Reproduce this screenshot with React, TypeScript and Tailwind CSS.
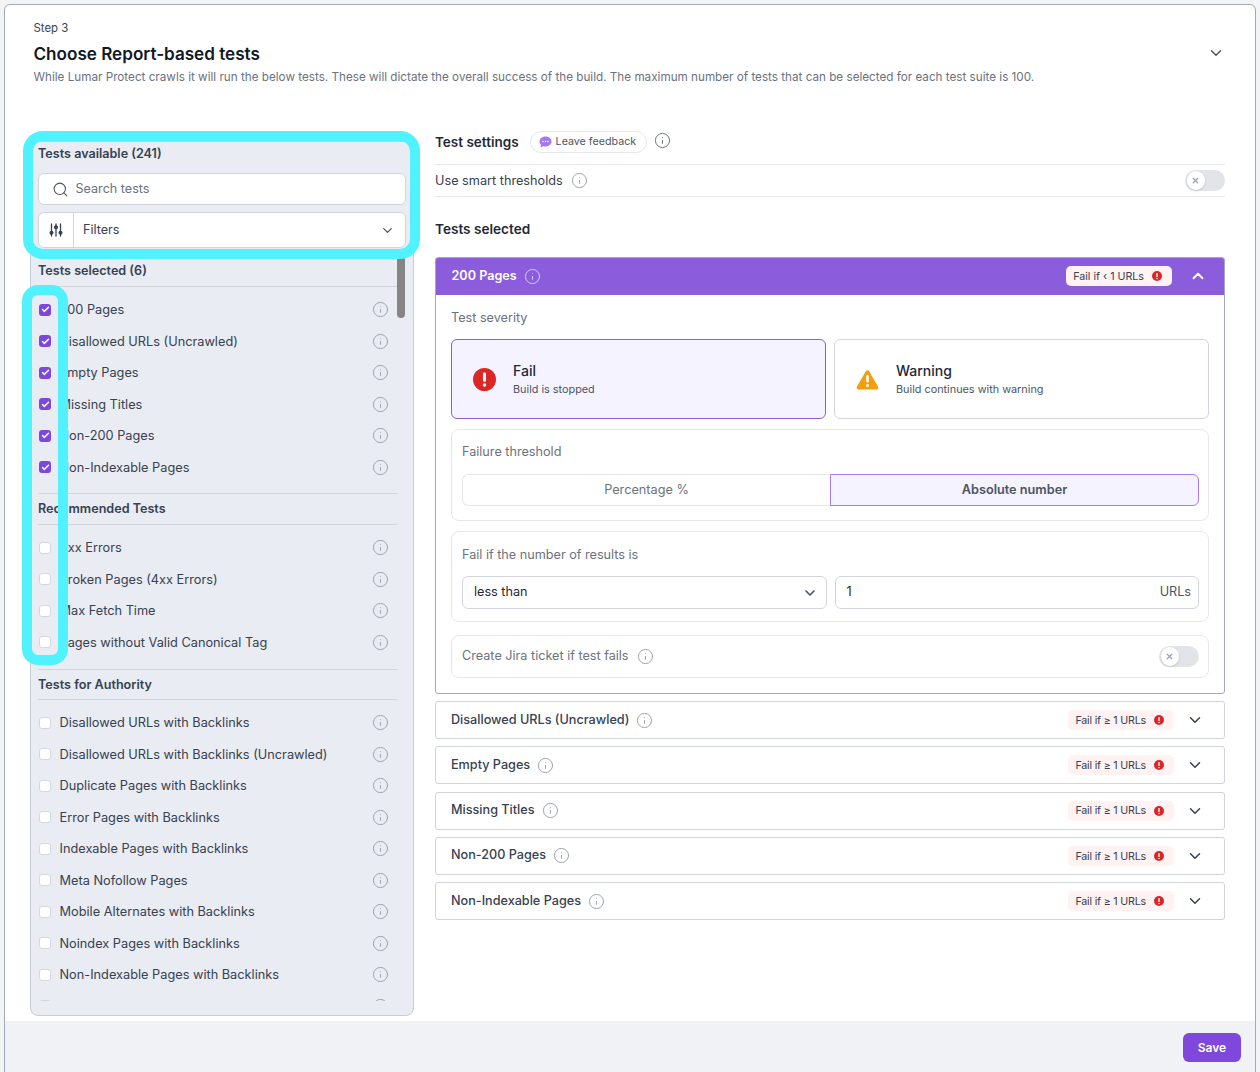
import React from 'react';
import { Check, ChevronDown, ChevronUp, Info, Search, X } from 'lucide-react';

const selectedTests = ['200 Pages', 'Disallowed URLs (Uncrawled)', 'Empty Pages', 'Missing Titles', 'Non-200 Pages', 'Non-Indexable Pages'];
const recommendedTests = ['4xx Errors', 'Broken Pages (4xx Errors)', 'Max Fetch Time', 'Pages without Valid Canonical Tag'];
const authorityTests = [
  'Disallowed URLs with Backlinks',
  'Disallowed URLs with Backlinks (Uncrawled)',
  'Duplicate Pages with Backlinks',
  'Error Pages with Backlinks',
  'Indexable Pages with Backlinks',
  'Meta Nofollow Pages',
  'Mobile Alternates with Backlinks',
  'Noindex Pages with Backlinks',
  'Non-Indexable Pages with Backlinks',
  '', // next row is scrolled out, only the top of its info icon shows
];
const collapsedTests = ['Disallowed URLs (Uncrawled)', 'Empty Pages', 'Missing Titles', 'Non-200 Pages', 'Non-Indexable Pages'];

const InfoIcon: React.FC<{ className?: string }> = ({ className = 'text-[#9ca3af]' }) => (
  <Info size={17} strokeWidth={1.4} className={`shrink-0 ${className}`} />
);

const FailIcon: React.FC<{ size: number }> = ({ size }) => (
  <svg width={size} height={size} viewBox="0 0 24 24" className="shrink-0">
    <circle cx="12" cy="12" r="12" fill="#dc2626" />
    <rect x="10.4" y="4.8" width="3.2" height="9.6" rx="1.4" fill="#fff" />
    <circle cx="12" cy="17.8" r="1.8" fill="#fff" />
  </svg>
);

const WarningIcon: React.FC = () => (
  <svg width="23" height="21" viewBox="0 0 23 21" className="shrink-0">
    <path d="M11.5 1.2c.7 0 1.3.4 1.7 1l8.9 15.6c.7 1.2-.1 2.7-1.5 2.7H2.4c-1.4 0-2.2-1.5-1.5-2.7L9.8 2.2c.4-.6 1-1 1.7-1z" fill="#f59e0b" />
    <rect x="10.2" y="6" width="2.6" height="7.6" rx="1.1" fill="#fff" />
    <circle cx="11.5" cy="16.4" r="1.5" fill="#fff" />
  </svg>
);

const FiltersIcon: React.FC = () => (
  <svg width="14" height="14" viewBox="0 0 14 14" fill="none" stroke="#374151" strokeWidth="1.3" strokeLinecap="round">
    <path d="M2.5 1v7M2.5 11.5V13M7 1v1.5M7 6v7M11.5 1v7M11.5 11.5V13" />
    <circle cx="2.5" cy="9.8" r="1.4" fill="#374151" />
    <circle cx="7" cy="4.2" r="1.4" fill="#374151" />
    <circle cx="11.5" cy="9.8" r="1.4" fill="#374151" />
  </svg>
);

const FeedbackIcon: React.FC = () => (
  <svg width="13" height="12" viewBox="0 0 13 12" className="shrink-0">
    <path d="M6.5.5C9.9.5 12.5 2.7 12.5 5.5S9.9 10.5 6.5 10.5c-.8 0-1.5-.1-2.2-.3L1.5 11.5l.5-2.8C1 7.8.5 6.7.5 5.5.5 2.7 3.1.5 6.5.5z" fill="#a678f0" />
    <circle cx="4" cy="5.5" r=".8" fill="#fff" />
    <circle cx="6.5" cy="5.5" r=".8" fill="#fff" />
    <circle cx="9" cy="5.5" r=".8" fill="#fff" />
  </svg>
);

const Toggle: React.FC = () => (
  <div className="flex h-[21px] w-10 shrink-0 items-center rounded-full bg-[#e2e4e9] pl-[1.5px]">
    <div className="flex h-[18.5px] w-[18.5px] items-center justify-center rounded-full bg-white shadow-sm">
      <X size={9} strokeWidth={3.5} className="text-[#9ca3af]" />
    </div>
  </div>
);

const TestRow: React.FC<{ label: string; checked?: boolean }> = ({ label, checked }) => (
  <div className="flex h-[31.5px] items-center pl-px pr-[17px]">
    {checked ? (
      <div className="flex h-3 w-3 shrink-0 items-center justify-center rounded-[3px] bg-[#7c47dc]">
        <Check size={9} strokeWidth={4} className="text-white" />
      </div>
    ) : (
      <div className="h-3 w-3 shrink-0 rounded-[3px] border border-[#d4d7e0] bg-white" />
    )}
    <span className="ml-[8.5px] flex-1 text-[12.75px] text-[#374151]">{label}</span>
    <InfoIcon />
  </div>
);

const GroupTitle: React.FC<{ title: string; className?: string }> = ({ title, className }) => (
  <div className={`mr-[9px] border-b border-[#d1d5db] text-[12.6px] font-semibold leading-4 text-[#374151] ${className}`}>{title}</div>
);

const FailBadge: React.FC<{ text: string; className?: string }> = ({ text, className }) => (
  <div className={`flex h-5 items-center gap-2 rounded-[5px] bg-[#fef2f2] pl-[7px] pr-[10px] text-[10.7px] text-[#374151] ${className}`}>
    <span className="pt-[2px]">{text}</span>
    <FailIcon size={10} />
  </div>
);

const App: React.FC = () => {
  return (
    <div className="relative h-[1072px] overflow-hidden bg-[#f3f4f6] pl-1 pr-1 pt-1 font-['Inter',sans-serif]">
      <div className="flex h-[1080px] flex-col rounded-t-md border border-[#a3a9bc] bg-white">
        <div className="flex justify-between pl-[28.5px] pr-[30px] pt-[15px]">
          <div>
            <p className="text-[11.4px] leading-4 text-[#374151]">Step 3</p>
            <h1 className="mt-[6px] text-[17.1px] font-semibold leading-6 text-[#111827]">Choose Report-based tests</h1>
            <p className="mt-[3px] text-[11.7px] leading-4 text-[#6b7280]">
              While Lumar Protect crawls it will run the below tests. These will dictate the overall success of the build. The maximum number of tests that can be selected for each test suite is 100.
            </p>
          </div>
          <ChevronDown size={18} className="mt-6 text-[#4b5563]" />
        </div>

        <div className="mt-[56px] flex gap-[21px] pl-[25px] pr-[30px]">
          {/* tests available */}
          <div className="relative h-[875px] w-[384px] shrink-0 overflow-hidden rounded-lg border border-[#c9cdd9] bg-[#e9ecf2] px-[7px]">
            <div className="absolute right-2 top-[108px] h-[68px] w-2 rounded-b-full bg-[#858585]" />
            <div className="h-[859px] overflow-hidden">
              <p className="mt-[4px] text-[12.6px] font-semibold leading-4 text-[#374151]">Tests available (241)</p>
              <div className="mt-[11px] flex h-8 items-center rounded-md border border-[#d1d5db] bg-white pl-[13px]">
                <Search size={17} strokeWidth={1.5} className="text-[#4b5563]" />
                <span className="ml-[6.5px] text-[12.6px] text-[#6b7280]">Search tests</span>
              </div>
              <div className="mt-[7px] flex h-[36px] items-center rounded-md border border-[#d1d5db] bg-white">
                <div className="flex h-full w-[35px] items-center justify-center border-r border-[#d1d5db]">
                  <FiltersIcon />
                </div>
                <span className="ml-[9px] flex-1 text-[12.6px] text-[#374151]">Filters</span>
                <ChevronDown size={15} className="mr-[10px] text-[#4b5563]" />
              </div>

              <GroupTitle title="Tests selected (6)" className="mt-[15px] pb-[7px]" />
              <div className="mt-[7px]">
                {selectedTests.map((t) => <TestRow key={t} label={t} checked />)}
              </div>
              <GroupTitle title="Recommended Tests" className="mt-[10px] border-t pb-[7px] pt-[7px]" />
              <div className="mt-[7px]">
                {recommendedTests.map((t) => <TestRow key={t} label={t} />)}
              </div>
              <GroupTitle title="Tests for Authority" className="mt-[11px] border-t pb-[6px] pt-[7px]" />
              <div className="mt-[7px]">
                {authorityTests.map((t) => <TestRow key={t} label={t} />)}
              </div>
            </div>
          </div>

          {/* test settings */}
          <div className="-mt-[11px] flex-1">
            <div className="flex h-[24px] items-center">
              <h2 className="text-[13.5px] font-semibold text-[#1f2937]">Test settings</h2>
              <div className="ml-[11px] flex h-[22px] items-center gap-[4px] rounded-full border border-[#e5e7eb] pl-2 pr-[10px] text-[10.7px] text-[#4b5563]">
                <FeedbackIcon />
                Leave feedback
              </div>
              <div className="-mt-[3px] ml-[7px]"><InfoIcon className="text-[#6b7280]" /></div>
            </div>
            <div className="mt-[10px] flex h-[33px] items-center justify-between border-y border-[#e5e7eb]">
              <div className="flex items-center gap-[8px]">
                <span className="pt-px text-[12.7px] text-[#374151]">Use smart thresholds</span>
                <InfoIcon />
              </div>
              <Toggle />
            </div>
            <h2 className="mt-[24px] text-[13.6px] font-semibold leading-4 text-[#1f2937]">Tests selected</h2>

            <div className="mt-[20px] overflow-hidden rounded-[3px] border border-[#a3a9bc]">
              <div className="-mx-px -mt-px flex h-[38px] items-center bg-[#8b5cdc] pl-[16.5px] pr-[18px]">
                <span className="text-[12.6px] font-semibold text-white">200 Pages</span>
                <div className="ml-[7px] flex-1"><InfoIcon className="text-[#d8cdf3]" /></div>
                <FailBadge text="Fail if ‹ 1 URLs" />
                <ChevronUp size={18} strokeWidth={2.5} className="ml-[17px] text-white" />
              </div>
              <div className="px-[15px] pb-[15px]">
                <p className="mt-[15px] text-[12.65px] leading-4 text-[#6b7280]">Test severity</p>
                <div className="mt-[13px] grid grid-cols-2 gap-2">
                  <div className="flex h-20 items-center rounded-md border border-[#8b5cdc] bg-[#f5f3ff] pl-[21px]">
                    <FailIcon size={23} />
                    <div className="ml-[17px]">
                      <p className="text-sm font-medium leading-5 text-[#1f2937]">Fail</p>
                      <p className="text-[10.85px] leading-4 text-[#4b5563]">Build is stopped</p>
                    </div>
                  </div>
                  <div className="flex h-20 items-center rounded-md border border-[#d1d5db] pl-[21px]">
                    <WarningIcon />
                    <div className="ml-[17px]">
                      <p className="text-sm font-medium leading-5 text-[#1f2937]">Warning</p>
                      <p className="text-[10.85px] leading-4 text-[#4b5563]">Build continues with warning</p>
                    </div>
                  </div>
                </div>
                <div className="mt-[10px] rounded-lg border border-[#e5e7eb] pb-[14px] pl-[10px] pr-[9px] pt-[14px]">
                  <p className="text-[12.65px] leading-4 text-[#6b7280]">Failure threshold</p>
                  <div className="mt-[14px] flex h-8">
                    <div className="flex flex-1 items-center justify-center rounded-l-md border border-r-0 border-[#e5e7eb] text-[12.7px] text-[#6b7280]">Percentage %</div>
                    <div className="flex flex-1 items-center justify-center rounded-r-md border border-[#a47df0] bg-[#f5f3ff] text-[12.7px] font-semibold text-[#4b5563]">Absolute number</div>
                  </div>
                </div>
                <div className="mt-[10px] rounded-lg border border-[#e5e7eb] pb-[12px] pl-[10px] pr-[9px] pt-[15px]">
                  <p className="text-[12.65px] leading-4 text-[#6b7280]">Fail if the number of results is</p>
                  <div className="mt-[13px] grid grid-cols-2 gap-2">
                    <div className="flex h-[33px] items-center justify-between rounded-md border border-[#d1d5db] pl-[11px] pr-2 text-[12.65px] text-[#1f2937]">
                      less than
                      <ChevronDown size={16} strokeWidth={2.5} className="text-[#4b5563]" />
                    </div>
                    <div className="flex h-[33px] items-center justify-between rounded-md border border-[#d1d5db] pl-[11px] pr-[7px] text-[12.65px] text-[#1f2937]">
                      <span>1</span>
                      <span className="text-[#4b5563]">URLs</span>
                    </div>
                  </div>
                </div>
                <div className="mt-[13px] flex h-[43px] items-center justify-between rounded-lg border border-[#e5e7eb] pl-[10px] pr-[9px]">
                  <div className="flex items-center gap-[8px]">
                    <span className="text-[12.65px] text-[#6b7280]">Create Jira ticket if test fails</span>
                    <InfoIcon />
                  </div>
                  <Toggle />
                </div>
              </div>
            </div>

            <div className="mt-[7px] flex flex-col gap-[7.25px]">
              {collapsedTests.map((t) => (
                <div key={t} className="flex h-[38px] items-center rounded-[3px] border border-[#d1d5db] pl-[15px] pr-[20px]">
                  <span className="text-[12.65px] font-medium text-[#374151]">{t}</span>
                  <div className="ml-[7px] flex-1"><InfoIcon /></div>
                  <FailBadge text="Fail if ≥ 1 URLs" className="tracking-[-0.2px]" />
                  <ChevronDown size={18} className="ml-[12px] text-[#374151]" />
                </div>
              ))}
            </div>
          </div>
        </div>
      </div>

      {/* footer sits over the bottom of the card */}
      <div className="absolute bottom-0 left-[5px] right-[5px] flex h-[51px] items-start justify-end bg-[#f1f2f5] pr-[14px] pt-3">
        <button className="h-[29px] w-[58px] rounded-md bg-[#8047dd] text-xs font-semibold text-white">Save</button>
      </div>

      {/* cyan annotation highlights */}
      <div className="absolute left-[23px] top-[131px] h-[128px] w-[397px] rounded-[20px] border-[10px] border-[#4ff2fe]" />
      <div className="absolute left-[22px] top-[285px] h-[380px] w-[46px] rounded-[16px] border-[10px] border-[#4ff2fe]" />
    </div>
  );
};

export default App;
